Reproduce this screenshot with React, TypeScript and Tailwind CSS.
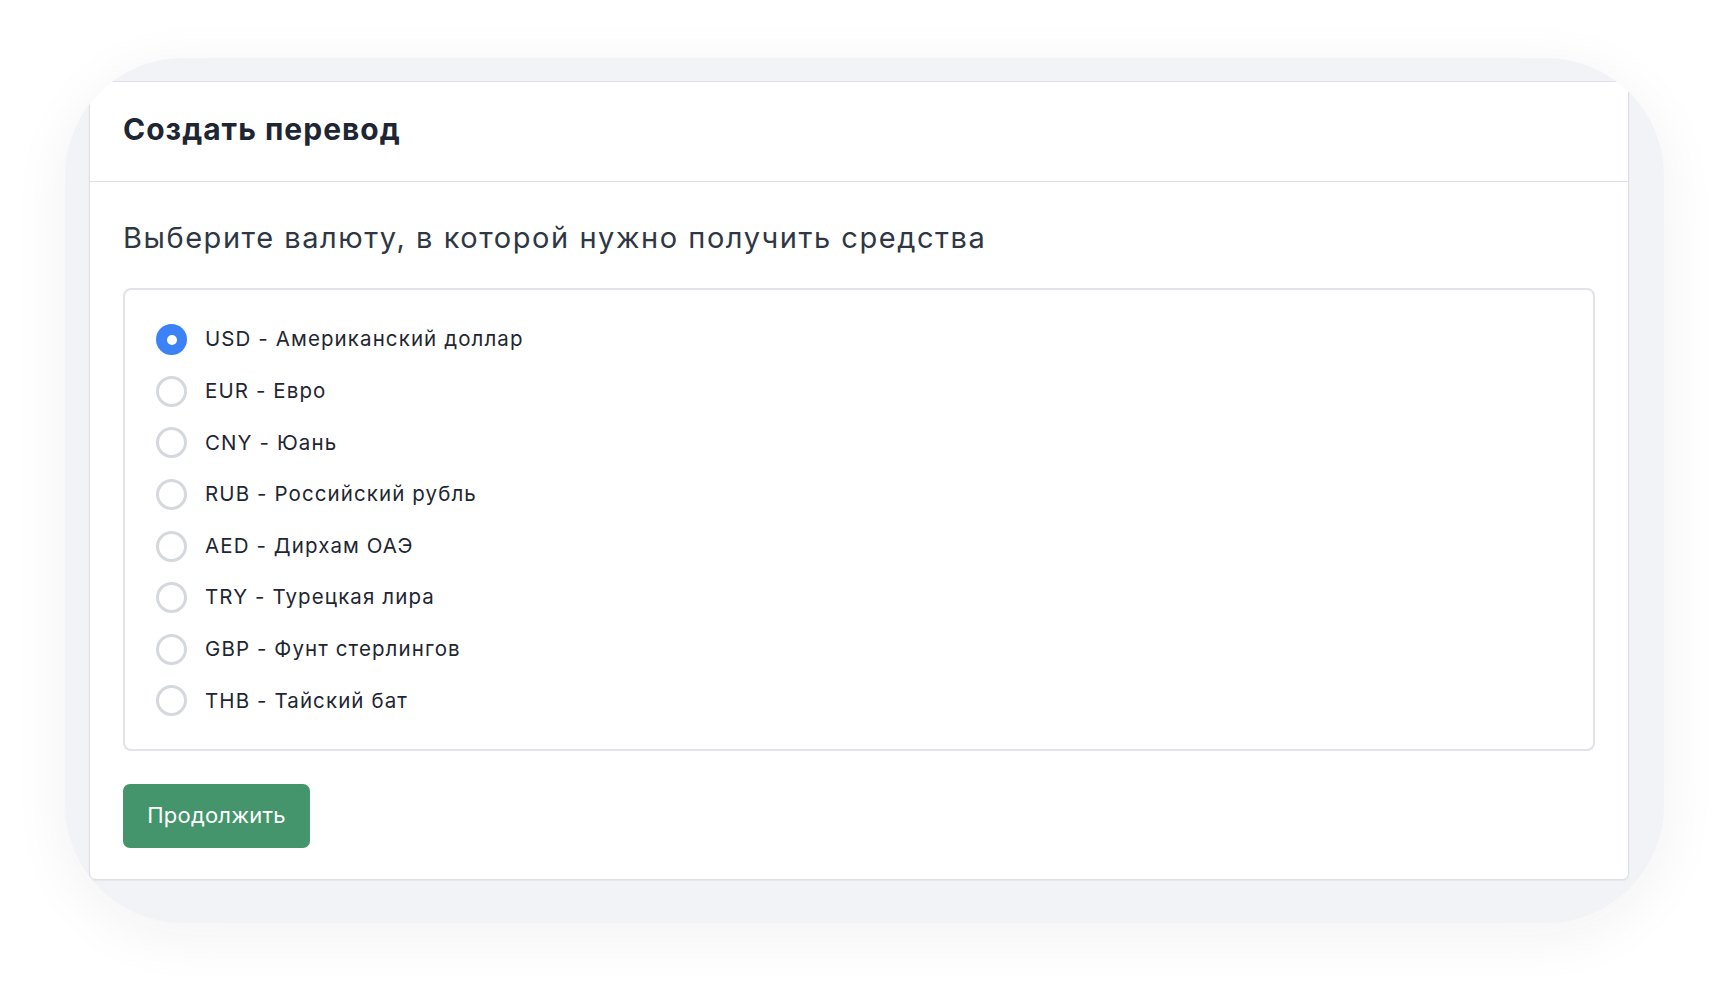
import React, { useState } from "react";

const currencies = [
  "USD - Американский доллар",
  "EUR - Евро",
  "CNY - Юань",
  "RUB - Российский рубль",
  "AED - Дирхам ОАЭ",
  "TRY - Турецкая лира",
  "GBP - Фунт стерлингов",
  "THB - Тайский бат",
];

export default function App() {
  const [selected, setSelected] = useState(0);
  return (
    <div
      className="w-[1728px] h-[995px] bg-white overflow-hidden pt-[58px] pl-[65px]"
      style={{ fontFamily: "Inter, 'Noto Sans', sans-serif" }}
    >
      <div className="w-[1599px] h-[865px] rounded-[118px] bg-[#f2f3f7] overflow-hidden pt-[23px] pl-[24px] shadow-[0_12px_60px_rgba(30,35,60,0.06)]">
        <div className="w-[1540px] bg-white border border-[#dfe0e5] rounded-[7px] shadow-[0_1px_2px_rgba(0,0,0,0.06)]">
          <div className="h-[100px] border-b border-[#dfe0e5] flex items-center px-[33px] pb-[5px]">
            <h1 className="text-[30px] font-bold text-[#1f2633] tracking-[1px]">
              Создать перевод
            </h1>
          </div>
          <div className="px-[33px] pt-[38px] pb-[31px]">
            <p className="text-[29px] leading-[36px] text-[#2f3744] tracking-[1.55px]">
              Выберите валюту, в которой нужно получить средства
            </p>
            <div className="mt-[32px] border-2 border-[#e1e3e8] rounded-[8px] pt-[24px] pb-[22px] px-[31px]">
              {currencies.map((c, i) => (
                <label
                  key={c}
                  className="flex items-center h-[51.6px] gap-[18px] cursor-pointer"
                  onClick={() => setSelected(i)}
                >
                  {selected === i ? (
                    <span className="w-[31px] h-[31px] rounded-full bg-[#3b82f6] flex items-center justify-center shrink-0">
                      <span className="w-[10px] h-[10px] rounded-full bg-white" />
                    </span>
                  ) : (
                    <span className="w-[31px] h-[31px] rounded-full border-[3px] border-[#d5d8dd] bg-white shrink-0" />
                  )}
                  <span className="text-[20.5px] text-[#1f2633] tracking-[1.1px]">{c}</span>
                </label>
              ))}
            </div>
            <button className="mt-[33px] h-[64px] w-[187px] justify-center rounded-[7px] bg-[#44956b] text-white text-[22px] tracking-[0.2px] flex items-center">
              Продолжить
            </button>
          </div>
        </div>
      </div>
    </div>
  );
}
